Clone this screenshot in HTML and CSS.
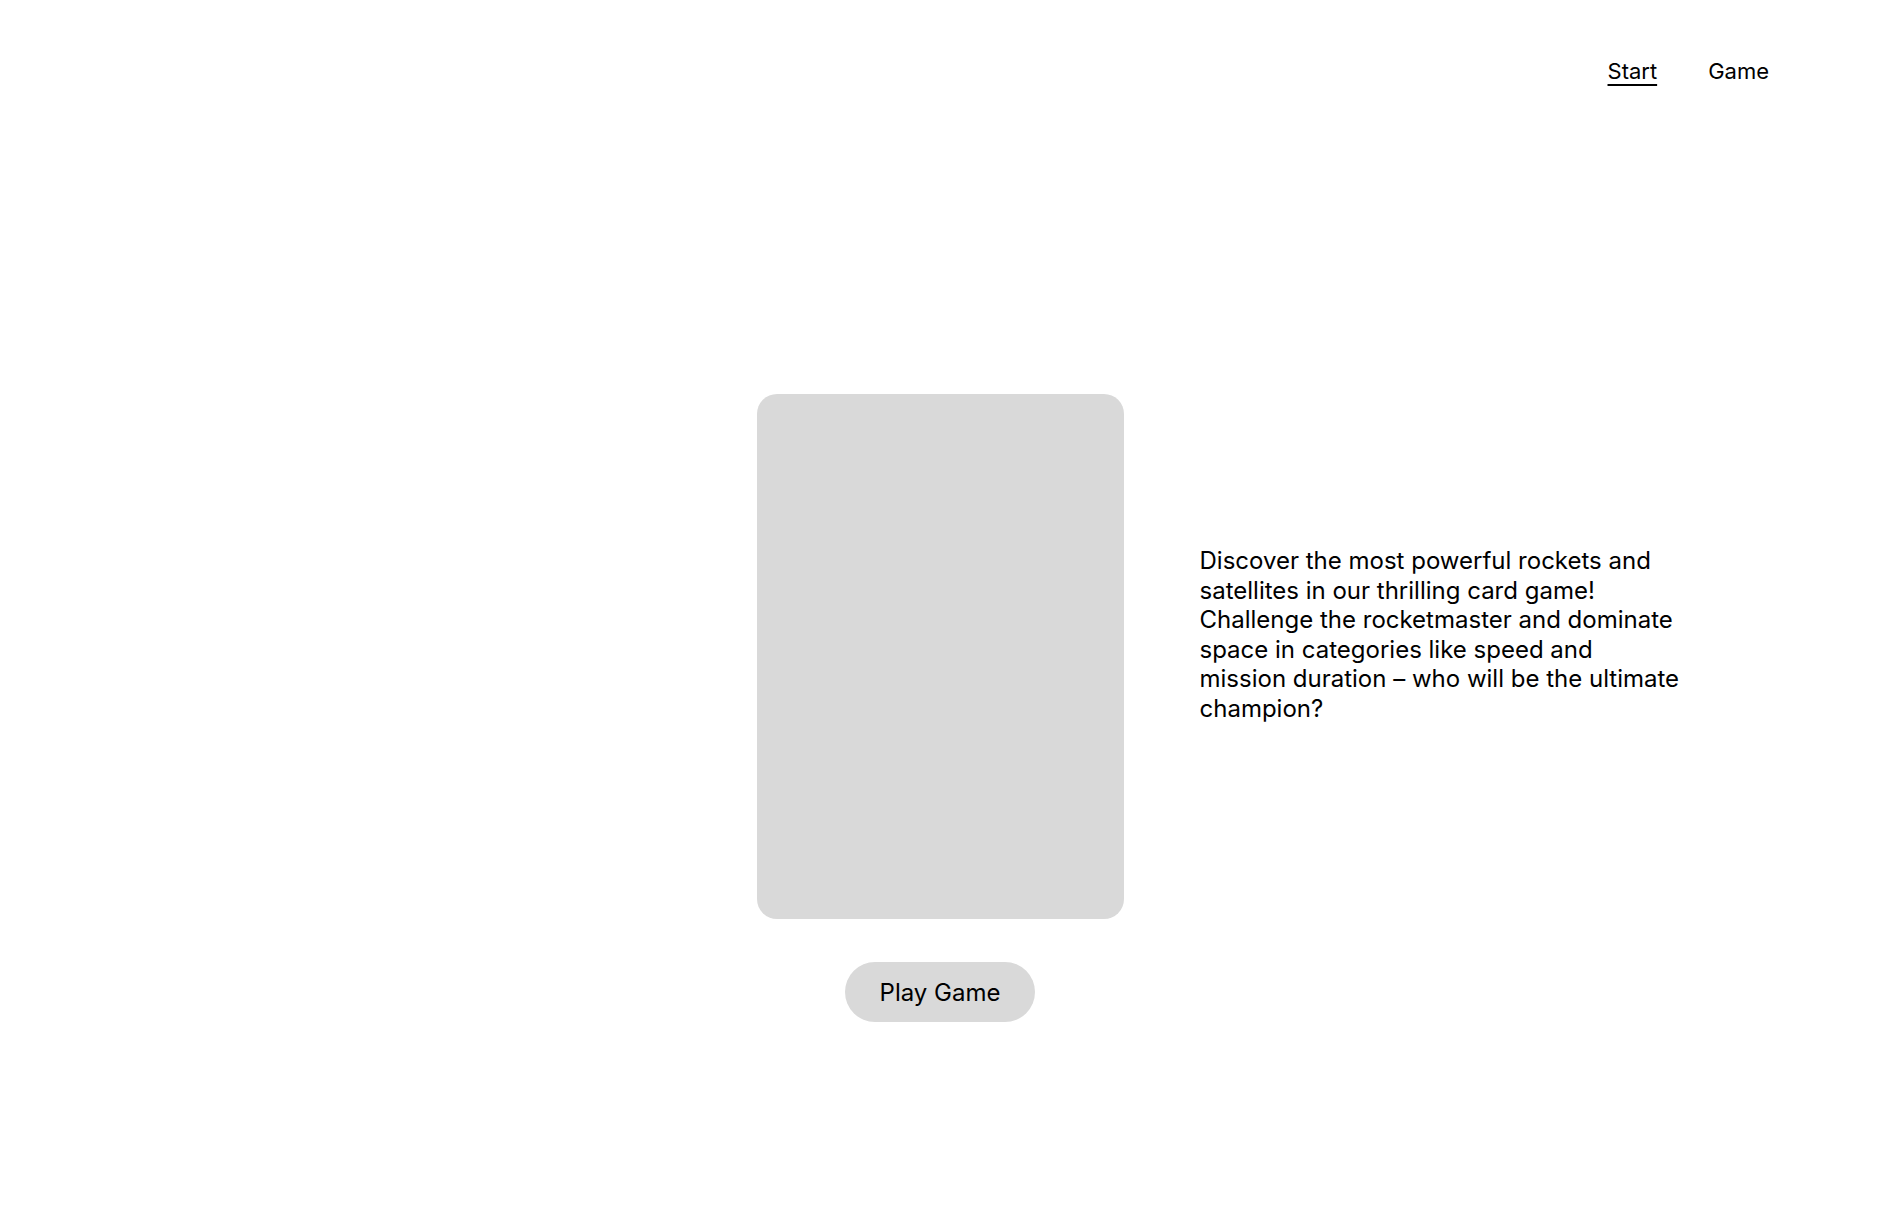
FILE: index.html
```html
<!DOCTYPE html>
<html lang="en">
<head>
    <meta charset="UTF-8">
    <meta name="viewport" content="width=device-width, initial-scale=1.0">
    <title>Rocketmaster</title>
    <link rel="stylesheet" href="styles.css">
</head>
<body>
    <header class="top-bar">
        <nav class="nav">
            <a href="#" class="nav-link active">Start</a>
            <a href="#" class="nav-link">Game</a>
        </nav>
    </header>

    <main class="start">
        <div class="card-preview"></div>
        <p class="intro">
            Discover the most powerful rockets and satellites in our thrilling card game!
            Challenge the rocketmaster and dominate space in categories like speed and
            mission duration – who will be the ultimate champion?
        </p>
        <button class="play-btn">Play Game</button>
    </main>
</body>
</html>
```

FILE: styles.css
```css
body {
    margin: 0;
    background-color: #fff;
    font-family: 'Inter', 'Noto Sans', sans-serif;
    color: #000;
}

.top-bar {
    display: flex;
    justify-content: flex-end;
    padding: 58px 111px 0 0;
}

.nav {
    display: flex;
    gap: 51px;
}

.nav-link {
    color: #000;
    font-size: 22px;
    line-height: 27px;
    text-decoration: none;
}

.nav-link.active {
    text-decoration: underline;
    text-decoration-thickness: 1.5px;
    text-underline-offset: 5px;
}

/* Start Screen */
.start {
    display: grid;
    grid-template-columns: 1fr 367px 1fr;
    padding-top: 309px;
}

.card-preview {
    grid-column: 2;
    grid-row: 1;
    height: 525px;
    background: #d9d9d9;
    border-radius: 20px;
}

.intro {
    grid-column: 3;
    grid-row: 1;
    align-self: center;
    width: 484px;
    margin: 0 0 44px 76px;
    font-size: 24px;
    line-height: 29.5px;
}

.play-btn {
    grid-column: 2;
    grid-row: 2;
    justify-self: center;
    margin-top: 43px;
    width: 190px;
    height: 60px;
    border: none;
    border-radius: 30px;
    background: #d9d9d9;
    color: #000;
    font-family: 'Inter', 'Noto Sans', sans-serif;
    font-size: 24px;
    cursor: pointer;
}
```
